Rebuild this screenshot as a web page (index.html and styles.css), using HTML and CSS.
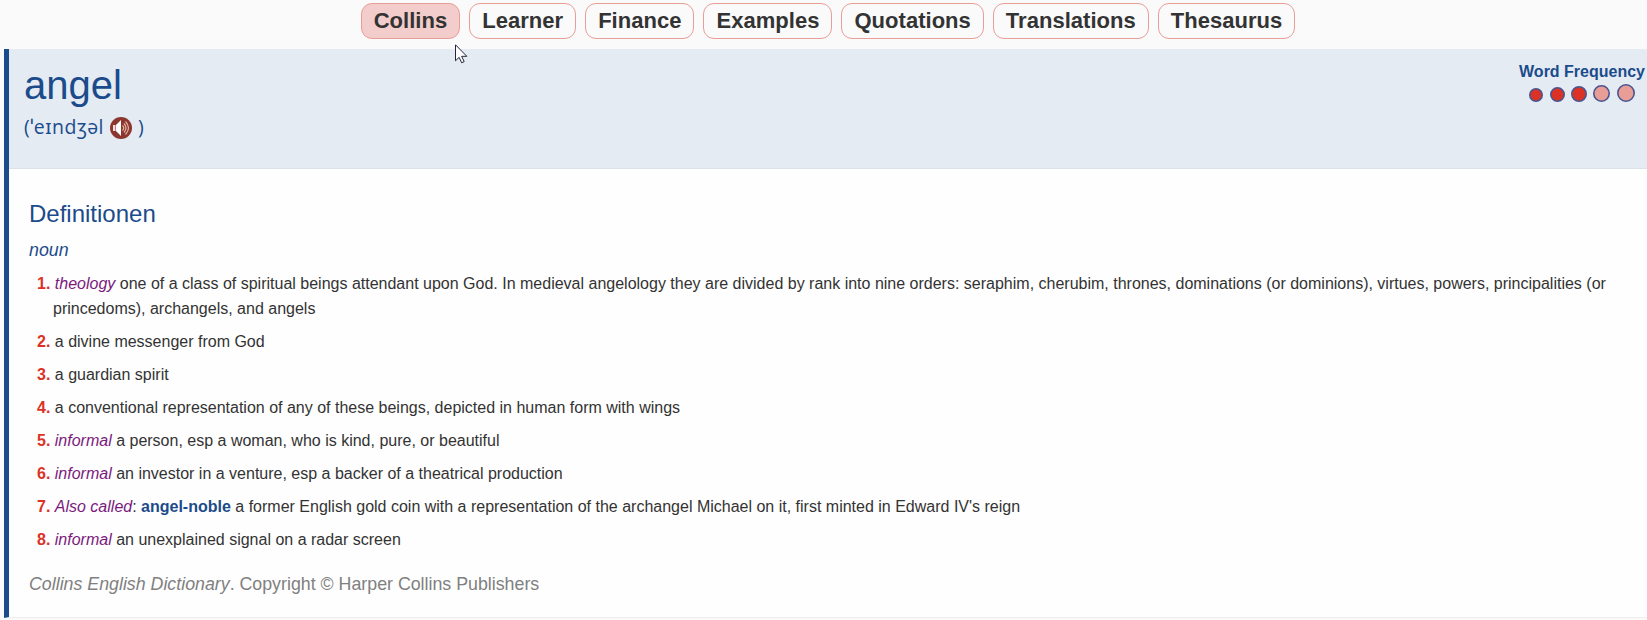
FILE: index.html
```html
<!DOCTYPE html>
<html lang="en">
<head>
  <meta charset="UTF-8" />
  <title>angel - Collins English Dictionary</title>
  <meta name="viewport" content="width=device-width, initial-scale=1.0" />
  <link rel="stylesheet" href="styles.css">
</head>
<body>

<nav class="tabs">
  <a class="tab active">Collins</a>
  <a class="tab">Learner</a>
  <a class="tab">Finance</a>
  <a class="tab">Examples</a>
  <a class="tab">Quotations</a>
  <a class="tab">Translations</a>
  <a class="tab">Thesaurus</a>
</nav>

<div class="entry">
  <div class="entry-head">
    <div class="word">
      <h1>angel</h1>
      <div class="pron">
        <span class="ipa">(ˈeɪndʒəl</span>
        <svg class="sound" viewBox="0 0 22 22" width="22" height="22">
          <circle cx="11" cy="11" r="11" fill="#8c3630"/>
          <path d="M3 8h2.500v6H3z" fill="#f3dcda"/>
          <path d="M6 8l5-5v16l-5-5z" fill="#fff"/>
          <path d="M12.500 8.500q2.500 2.500 0 5M14 6.500q4 4.500 0 9M15.500 4.500q6 6.500 0 13" fill="none" stroke="#e2b39f" stroke-width="1.200"/>
        </svg>
        <span class="ipa">)</span>
      </div>
    </div>
    <div class="frequency">
      <div class="frequency-title">Word Frequency</div>
      <svg class="dots" width="108" height="20" viewBox="0 0 108 20">
        <g stroke="#49558f" stroke-width="1.600" fill="#dc3226">
          <circle cx="8" cy="12" r="6.200"/>
          <circle cx="29.500" cy="11.500" r="6.700"/>
          <circle cx="51" cy="11" r="7.200"/>
          <circle cx="73.500" cy="10.500" r="7.700" fill="#e99d97"/>
          <circle cx="98" cy="10" r="8.200" fill="#e99d97"/>
        </g>
      </svg>
    </div>
  </div>

  <div class="entry-body">
    <h2>Definitionen</h2>
    <div class="pos">noun</div>
    <div class="sense"><b>1.</b> <i>theology</i> one of a class of spiritual beings attendant upon God. In medieval angelology they are divided by rank into nine orders: seraphim, cherubim, thrones, dominations (or dominions), virtues, powers, principalities (or princedoms), archangels, and angels</div>
    <div class="sense"><b>2.</b> a divine messenger from God</div>
    <div class="sense"><b>3.</b> a guardian spirit</div>
    <div class="sense"><b>4.</b> a conventional representation of any of these beings, depicted in human form with wings</div>
    <div class="sense"><b>5.</b> <i>informal</i> a person, esp a woman, who is kind, pure, or beautiful</div>
    <div class="sense"><b>6.</b> <i>informal</i> an investor in a venture, esp a backer of a theatrical production</div>
    <div class="sense"><b>7.</b> <i>Also called</i>: <strong>angel-noble</strong> a former English gold coin with a representation of the archangel Michael on it, first minted in Edward IV's reign</div>
    <div class="sense"><b>8.</b> <i>informal</i> an unexplained signal on a radar screen</div>
    <div class="copyright"><i>Collins English Dictionary</i>. Copyright © Harper Collins Publishers</div>
  </div>
</div>

<svg class="cursor" width="13" height="20" viewBox="0 0 13 20">
  <path d="M.500 .800v16l3.600-3.500 2.600 5.500 2.500-1.200-2.600-5.300h5.200z" fill="#fff" stroke="#26233a"/>
</svg>

</body>
</html>
```
FILE: styles.css
```css
body {
  margin: 0;
  background: #fafafa;
  color: #333;
  font-family: "Liberation Sans", Arial, sans-serif;
  font-size: 16px;
  overflow: hidden;
}
.tabs {
  display: flex;
  justify-content: center;
  gap: 9px;
  height: 46px;
  padding: 3px 0 0 9px;
  align-items: flex-start;
}
.tab {
  box-sizing: border-box;
  height: 36px;
  padding: 0 12px;
  border: 1px solid #e99d97;
  border-radius: 11px;
  font-size: 22px;
  font-weight: bold;
  line-height: 34px;
  letter-spacing: 0.03px;
}
.tab.active {
  background: #f3cdcb;
}
.entry {
  box-sizing: border-box;
  height: 569px;
  margin-left: 4px;
  border-left: 5px solid #1c4b8b;
  border-bottom: 1px solid #eee;
  background: #fefefe;
}
.entry-head {
  display: flex;
  justify-content: space-between;
  box-sizing: border-box;
  height: 120px;
  padding: 13px 2px 0 15px;
  background: #e4ebf3;
  border-bottom: 1px solid #dce1e9;
  color: #1c4b8b;
}
h1 {
  margin: 0;
  font-size: 40px;
  font-weight: normal;
  line-height: 46px;
}
.pron {
  display: flex;
  align-items: center;
  height: 39px;
  gap: 6px;
}
.ipa {
  font-family: "Open Sans", "Noto Sans", sans-serif;
  font-size: 19.500px;
  line-height: 26px;
  letter-spacing: 0.5px;
  padding-bottom: 2px;
}
.frequency-title {
  font-weight: bold;
  line-height: 20px;
}
.dots {
  display: block;
  margin: 1px 0 0 9px;
}
.entry-body {
  padding: 29px 36px 0 20px;
}
h2 {
  margin: 0;
  color: #1c4b8b;
  font-size: 24px;
  font-weight: normal;
  line-height: 32px;
}
.pos {
  margin: 7px 0 8px;
  color: #1c4b8b;
  font-size: 17.800px;
  font-style: italic;
  line-height: 26px;
}
.sense {
  margin-bottom: 8px;
  padding-left: 24px;
  text-indent: -16px;
  line-height: 25px;
}
.sense b {
  color: #dc3226;
}
.sense i {
  color: #7b1a7d;
}
.sense strong {
  color: #1c4b8b;
}
.copyright {
  margin-top: 19px;
  color: #808080;
  font-size: 17.800px;
  line-height: 26px;
}
.cursor {
  position: absolute;
  left: 455px;
  top: 44px;
}
```
